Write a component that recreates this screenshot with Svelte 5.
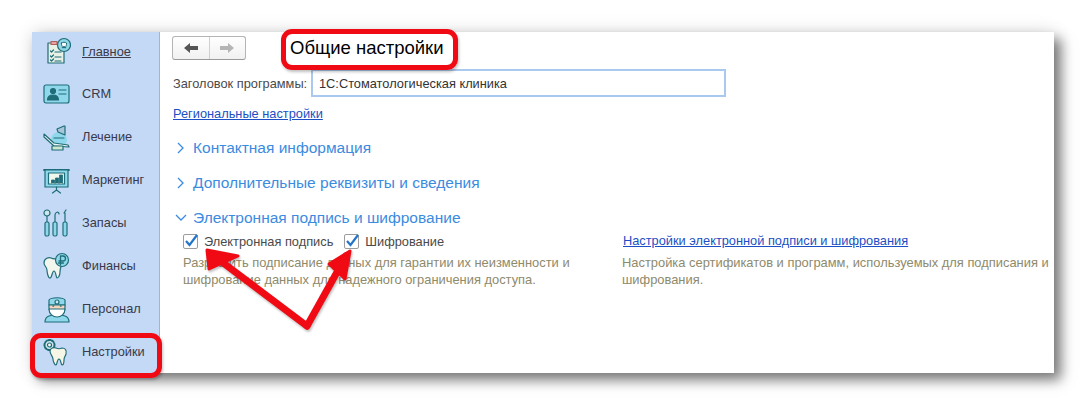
<script>
    // пункты левой панели; icon определяет, какая svg рисуется
    const menu = [
        { id: 'home', label: 'Главное', active: true },
        { id: 'crm', label: 'CRM' },
        { id: 'chair', label: 'Лечение' },
        { id: 'board', label: 'Маркетинг' },
        { id: 'tools', label: 'Запасы' },
        { id: 'money', label: 'Финансы' },
        { id: 'staff', label: 'Персонал' },
        { id: 'gear', label: 'Настройки' }
    ];
</script>

<div class="page">
    <div class="window">
        <nav class="side">
            {#each menu as item}
                <div class="item" class:active={item.active}>
                    <svg class="ico" viewBox="0 0 28 28" width="28" height="28" fill="none" stroke="#1f6d78" stroke-width="1.2" stroke-linejoin="round" stroke-linecap="round">
                        {#if item.id === 'home'}
                            <rect x="5" y="6" width="16" height="20" fill="#e8f1e6"/>
                            <path d="M8 4.500h6v3H8z" fill="#e8a0a0" stroke="#b06060"/>
                            <path d="M7.500 14l1 1 2-2M7.500 19l1 1 2-2M7.500 23l1 1 2-2M12 15h6M12 20h6M12 24h6"/>
                            <circle cx="21" cy="8" r="6.500" fill="#8fd6e6"/>
                            <path d="M18.500 6c1-1 4-1 5 0 .5 2-1 3-1 5h-.8l-.7-2-.7 2h-.8c0-2-1.500-3-1-5z" fill="#fff" stroke-width="1"/>
                        {:else if item.id === 'crm'}
                            <rect x="1" y="5" width="25" height="18" rx="2" fill="#8fd8ec"/>
                            <circle cx="10" cy="11" r="2.500" fill="#1f6d78"/>
                            <path d="M4.500 20c0-4 3-5 5.500-5s5.500 1 5.500 5z" fill="#1f6d78"/>
                            <path d="M16 10h7M16 14h7"/>
                        {:else if item.id === 'chair'}
                            <circle cx="16" cy="17" r="8" fill="#8fd8ec" stroke="none"/>
                            <path d="M14 6l7-3 1 0v9l-7-3z" fill="#a9c6d8"/>
                            <path d="M1 11l10 9 14 2 1 2-15-1-10-9z" fill="#eef5ee"/>
                            <path d="M11 15l10 0"/>
                            <rect x="9" y="23" width="11" height="4" fill="#cfe6cf"/>
                        {:else if item.id === 'board'}
                            <path d="M1 4h25" stroke-width="1.800"/>
                            <rect x="2" y="4" width="23" height="17" fill="#8fd8ec"/>
                            <rect x="5.500" y="7" width="16" height="11" fill="#f2f7ee"/>
                            <path d="M8.500 17v-3h3v3M12.500 17v-5h3v5M16.500 17V9h3v8" fill="#1f6d78" stroke-width=".8"/>
                            <path d="M13.500 21v3M13.500 24l-4 3M13.500 24l4 3"/>
                        {:else if item.id === 'tools'}
                            <circle cx="4" cy="4" r="3" fill="#cfe6ea"/>
                            <path d="M4 7v6M12 6c0-3 4-4 4-1M12 6v7M23 1l-2 3 1 0v9"/>
                            <rect x="2" y="13" width="4" height="14" rx="1.500" fill="#8fd8ec"/>
                            <rect x="10" y="13" width="4" height="14" rx="1.500" fill="#8fd8ec"/>
                            <rect x="20" y="13" width="4" height="14" rx="1.500" fill="#8fd8ec"/>
                        {:else if item.id === 'money'}
                            <path d="M1 11c0-5 5-6 7-5s5 1 7 0c3 0 5 2 4 6-1 3-2 4-2 8 0 4-2 6-3 6s-1-7-3-7-2 7-4 7-3-6-3-8c0-3-3-4-3-7z" fill="#f2f7ee"/>
                            <circle cx="19" cy="8" r="6.500" fill="#8fd8ec"/>
                            <path d="M17.500 13V4h2.500a2.500 2.500 0 0 1 0 5h-4M15.500 11h5" stroke-width="1.300"/>
                        {:else if item.id === 'staff'}
                            <path d="M2 27c0-6 5-7 12-7s12 1 12 7z" fill="#8fd8ec"/>
                            <path d="M6 5c2-3 14-3 16 0v5H6z" fill="#8fd8ec"/>
                            <circle cx="14" cy="7" r="2" fill="#cfe6ea"/>
                            <path d="M6 10h16v3c0 5-4 8-8 8s-8-3-8-8z" fill="#f5d6bd"/>
                            <path d="M6 14c3 0 13 0 16 0 0 5-4 8-8 8s-8-3-8-8z" fill="#fff"/>
                            <path d="M10 11h.5M17.500 11h.5" stroke-width="1.500"/>
                        {:else}
                            <circle cx="6.500" cy="7" r="5" fill="#cfe6ea" stroke-dasharray="2.200 1.400" stroke-width="2"/>
                            <circle cx="6.500" cy="7" r="2" fill="#fff"/>
                            <path d="M7 13c0-3 4-4 6-3s4 1 6 0c3 0 5 2 4 6-1 3-2 3-2 6 0 3-1 5-2 5s-1-6-3-6-2 6-3 6-3-3-3-6c0-3-3-4-3-8z" fill="#f6f6e6"/>
                        {/if}
                    </svg>
                    <span>{item.label}</span>
                </div>
            {/each}
        </nav>

        <main class="content">
            <div class="top">
                <div class="nav-btns">
                    <button class="arrow" aria-label="Назад">
                        <svg viewBox="0 0 16 12" width="16" height="12"><path d="M1 6l6-5v3h8v4H7v3z" fill="#555"/></svg>
                    </button>
                    <button class="arrow" aria-label="Вперед">
                        <svg viewBox="0 0 16 12" width="16" height="12"><path d="M15 6L9 1v3H1v4h8v3z" fill="#b5b5b5"/></svg>
                    </button>
                </div>
                <h1>Общие настройки</h1>
            </div>

            <div class="field">
                <label for="title">Заголовок программы:</label>
                <input id="title" value="1С:Стоматологическая клиника" />
            </div>

            <a class="link region" href="/region">Региональные настройки</a>

            <div class="group first"><svg class="chev" viewBox="0 0 10 12" width="10" height="12"><path d="M2 1l5 5-5 5"/></svg>Контактная информация</div>
            <div class="group"><svg class="chev" viewBox="0 0 10 12" width="10" height="12"><path d="M2 1l5 5-5 5"/></svg>Дополнительные реквизиты и сведения</div>
            <div class="group"><svg class="chev open" viewBox="0 0 12 10" width="12" height="10"><path d="M1 2l5 5 5-5"/></svg>Электронная подпись и шифрование</div>

            <div class="sign">
                <div>
                    <div class="checks">
                        <span class="check"><span class="box"><svg viewBox="0 0 15 15" width="15" height="15"><path d="M3 7l3.500 4L14 1" /></svg></span>Электронная подпись</span>
                        <span class="check"><span class="box"><svg viewBox="0 0 15 15" width="15" height="15"><path d="M3 7l3.500 4L14 1" /></svg></span>Шифрование</span>
                    </div>
                    <p class="note">Разрешить подписание данных для гарантии их неизменности и<br />шифрование данных для надежного ограничения доступа.</p>
                </div>
                <div>
                    <a class="link" href="/sign">Настройки электронной подписи и шифрования</a>
                    <p class="note">Настройка сертификатов и программ, используемых для подписания и<br />шифрования.</p>
                </div>
            </div>
        </main>
    </div>

    <!-- красные пометки поверх скриншота -->
    <div class="frame frame-title"></div>
    <div class="frame frame-menu"></div>
    <svg class="arrows" viewBox="0 0 1086 405" width="1086" height="405">
        <g fill="none" stroke="#f00a14" stroke-width="7" stroke-linecap="round" stroke-linejoin="round">
            <path d="M307 326L214 256"/>
            <path d="M307 326L346 256"/>
        </g>
        <g fill="#f00a14" stroke="#f00a14" stroke-width="3" stroke-linejoin="round">
            <path d="M207 250L238 256 209 269z"/>
            <path d="M350 251L329 264 345 279z"/>
        </g>
    </svg>
</div>

<style>
    :global(body) {
        background: #fff;
    }

    .page {
        position: relative;
        width: 1086px;
        height: 405px;
        padding: 32px;
        box-sizing: border-box;
        overflow: hidden;
        font-family: "Liberation Sans", Arial, sans-serif;
        font-size: 12.8px;
    }

    .window {
        display: flex;
        width: 1022px;
        height: 341px;
        background: #fff;
        box-shadow: 7px 7px 12px rgba(0, 0, 0, 0.5), 0 0 18px rgba(0, 0, 0, 0.12);
    }

    .side {
        flex: none;
        width: 127px;
        background: #c3d9f6;
        border-right: 1px solid #9db6d6;
        overflow: hidden;
    }

    .item {
        display: flex;
        align-items: center;
        gap: 11px;
        height: 43px;
        padding-left: 11px;
        color: #3a3a4a;
    }

    .item:first-child {
        height: 40px;
        box-sizing: border-box;
        padding-bottom: 2px;
    }

    .item.active span {
        text-decoration: underline;
    }

    .ico {
        flex: none;
    }

    .content {
        flex: 1;
        min-width: 0;
        padding: 4px 0 0 13px;
        overflow: hidden;
        color: #4a4a4a;
    }

    .top {
        display: flex;
        align-items: center;
        height: 24px;
    }

    .nav-btns {
        display: flex;
        width: 74px;
        height: 24px;
        margin-left: -1px;
        box-sizing: border-box;
        border: 1px solid #b4b4b4;
        border-bottom-color: #9a9a9a;
        border-radius: 3px;
        overflow: hidden;
        background: linear-gradient(#fff, #f1f1f1);
    }

    .arrow {
        flex: 1;
        display: flex;
        align-items: center;
        justify-content: center;
        padding: 0;
        border: 0;
        background: none;
    }

    .arrow + .arrow {
        border-left: 1px solid #d0d0d0;
    }

    h1 {
        margin: 0 0 0 44px;
        font-size: 18.500px;
        font-weight: 400;
        color: #000;
    }

    .field {
        display: flex;
        align-items: center;
        margin-top: 9px;
    }

    .field label {
        width: 138px;
        white-space: nowrap;
    }

    .field input {
        width: 415px;
        height: 28px;
        box-sizing: border-box;
        padding: 0 6px;
        border: 2px solid #a9c9ee;
        font: inherit;
        color: #333;
        outline: none;
    }

    .link {
        color: #1c4fc4;
        text-decoration: underline;
    }

    .region {
        display: block;
        margin-top: 9px;
        line-height: 16px;
    }

    .group {
        display: flex;
        align-items: center;
        height: 20px;
        margin-top: 15px;
        font-size: 15.500px;
        color: #3b8be0;
    }

    .group.first {
        margin-top: 16px;
    }

    .chev {
        width: 12px;
        margin: 0 6px 0 2px;
        flex: none;
        fill: none;
        stroke: #3b8be0;
        stroke-width: 1.3;
    }

    .sign {
        display: grid;
        grid-template-columns: 439px 1fr;
        margin: 5px 0 0 10px;
    }

    .checks {
        display: flex;
        gap: 11px;
        height: 16px;
        align-items: center;
    }

    .check {
        display: flex;
        align-items: center;
        gap: 6px;
    }

    .box {
        width: 15px;
        height: 15px;
        box-sizing: border-box;
        border: 1px solid #9c9c9c;
        border-radius: 2px;
        background: #fff;
        display: block;
    }

    .box svg {
        display: block;
        margin: -1px;
        fill: none;
        stroke: #2475c9;
        stroke-width: 2.2;
    }

    .sign .link {
        display: block;
        height: 16px;
        line-height: 16px;
        margin-left: 1px;
    }

    .note {
        margin: 5px 0 0;
        font-size: 12.900px;
        line-height: 17px;
        color: #8e8a6c;
        white-space: nowrap;
    }

    .frame {
        position: absolute;
        box-sizing: border-box;
        border: 5px solid #f00a14;
        border-radius: 11px;
        box-shadow: 1px 2px 3px rgba(0, 0, 0, 0.25);
    }

    .frame-title {
        left: 281px;
        top: 29px;
        width: 177px;
        height: 41px;
    }

    .frame-menu {
        left: 30px;
        top: 333px;
        width: 132px;
        height: 45px;
    }

    .arrows {
        position: absolute;
        left: 0;
        top: 0;
        filter: drop-shadow(1px 2px 1px rgba(0, 0, 0, 0.25));
        pointer-events: none;
    }
</style>
